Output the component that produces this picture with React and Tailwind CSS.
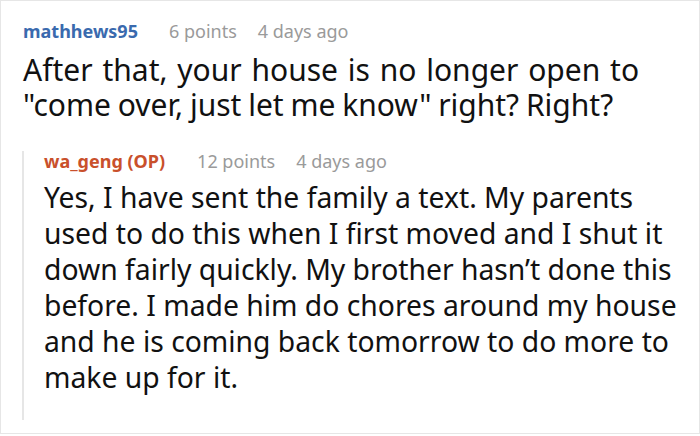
export default function App() {
  return (
    <div className="w-[700px] h-[436px] bg-white" style={{ fontFamily: '"Noto Sans", "Open Sans", sans-serif' }}>
      <div className="h-[434px] border border-[#e6e6e6] pt-[19px] pl-[22px] pr-2">
        <div className="flex items-baseline text-[18px] leading-[22px]">
          <span className="font-bold text-[#3a6aae]">mathhews95</span>
          <span className="ml-[31px] text-[#9a9a9a]">6 points</span>
          <span className="ml-[21px] text-[#9a9a9a]">4 days ago</span>
        </div>
        <p className="mt-[10px] text-[30px] leading-[35px] text-[#111] whitespace-nowrap">
          <span className="block [word-spacing:2px]">After that, your house is no longer open to</span>
          <span className="block [word-spacing:-1px]">"come over, just let me know" right? Right?</span>
        </p>
        <div className="mt-[29px] -ml-[1px] border-l-2 border-[#e6e6e6] pl-[20px] pb-[25px]">
          <div className="flex items-baseline text-[18px] leading-[20px]">
            <span className="font-bold text-[#c9502b]">wa_geng (OP)</span>
            <span className="ml-[32px] text-[#9a9a9a]">12 points</span>
            <span className="ml-[21px] text-[#9a9a9a]">4 days ago</span>
          </div>
          <p className="mt-[8px] text-[28.3px] leading-[36px] text-[#111] whitespace-nowrap">
            Yes, I have sent the family a text. My parents<br />used to do this when I first moved and I shut it<br />down fairly quickly. My brother hasn’t done this<br />before. I made him do chores around my house<br />and he is coming back tomorrow to do more to<br />make up for it.
          </p>
        </div>
      </div>
    </div>
  );
}
